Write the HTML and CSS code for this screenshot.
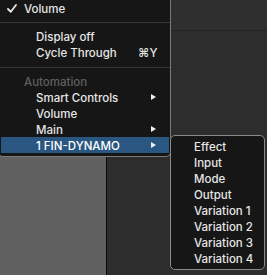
FILE: index.html
```html
<!DOCTYPE html>
<html lang="en">
<head>
  <meta charset="UTF-8" />
  <title>Track Menu</title>
  <link rel="stylesheet" href="styles.css">
</head>
<body>
  <div class="backdrop">
    <div class="pane-left"></div>
    <div class="pane-right">
      <div class="pane-head"></div>
    </div>
  </div>

  <div class="menu main-menu">
    <div class="item checked">
      <svg class="check" width="10" height="9" viewBox="0 0 10 9"><path d="M1 5 L3.8 7.8 L9 1" fill="none" stroke="#e8e8e8" stroke-width="1.8" stroke-linecap="round" stroke-linejoin="round"/></svg>
      <span>Volume</span>
    </div>
    <div class="sep first"></div>
    <div class="item indent">Display off</div>
    <div class="item indent">Cycle Through <span class="key">⌘Y</span></div>
    <div class="sep"></div>
    <div class="item heading">Automation</div>
    <div class="item indent">Smart Controls <span class="arrow"></span></div>
    <div class="item indent">Volume</div>
    <div class="item indent">Main <span class="arrow"></span></div>
    <div class="item indent active">1 FIN-DYNAMO <span class="arrow"></span></div>
  </div>

  <div class="menu sub-menu">
    <div class="item">Effect</div>
    <div class="item">Input</div>
    <div class="item">Mode</div>
    <div class="item">Output</div>
    <div class="item">Variation 1</div>
    <div class="item">Variation 2</div>
    <div class="item">Variation 3</div>
    <div class="item">Variation 4</div>
  </div>
</body>
</html>
```

FILE: styles.css
```css
html, body { margin: 0; padding: 0; width: 267px; height: 275px; overflow: hidden; }
body { font-family: "Inter", "Liberation Sans", Arial, sans-serif; font-size: 11.5px; font-weight: 500; color: #e6e6e6; background: #2d2d2d; }

/* window behind the menus */
.backdrop { display: flex; height: 275px; }
.pane-left { width: 106px; background: #616161; border-right: 1px solid #0a0a0a; }
.pane-right { flex: 1; background: #2d2d2d; }
.pane-head { height: 30px; background: #2f2f2f; border-bottom: 1px solid #232323; }

/* menus */
.menu { position: absolute; background: #161616; box-sizing: border-box; }
.main-menu { left: -2px; top: -8px; width: 173px; height: 165px; padding: 8px 2px 4px 2px; border: 1px solid #7b7b7b; border-top: none; border-radius: 0 0 5px 5px; }
.sub-menu { left: 170px; top: 135px; width: 95px; height: 135px; padding: 2px 2px 4px 2px; border: 1px solid #8a8a8a; border-radius: 5px; }

.item { box-sizing: border-box; height: 16px; padding-top: 2px; line-height: 14px; display: flex; align-items: center; position: relative; white-space: nowrap; }
.main-menu .item { padding-left: 23px; }
.main-menu .item.indent { padding-left: 35px; }
.main-menu .item.heading { padding-left: 23px; color: #5f5f5f; }
.sub-menu .item { padding-left: 21px; }

.check { position: absolute; left: 6px; top: 4px; }
.sep { height: 1px; background: #363636; margin: 7px 0 5px -2px; width: 171px; }
.sep.first { margin-top: 6px; }

.key { position: absolute; left: 137px; }
.arrow { position: absolute; left: 150px; top: 5px; width: 0; height: 0; border-top: 3px solid transparent; border-bottom: 3px solid transparent; border-left: 5px solid #f0f0f0; }

.active { background: #2a5781; color: #fff; margin-right: -1px; }
```
